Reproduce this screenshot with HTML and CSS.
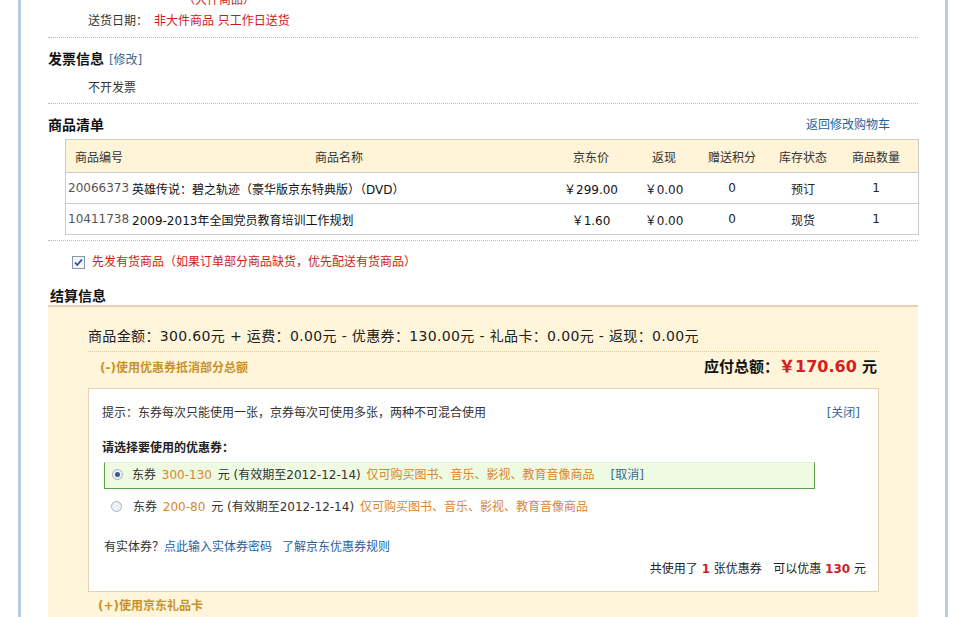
FILE: index.html
```html
<!DOCTYPE html>
<html lang="zh-CN">
<head>
    <meta charset="UTF-8">
    <title>订单结算</title>
    <link rel="stylesheet" href="styles.css">
</head>
<body>
<div class="main">
    <div class="section">
        <div class="row top-cut"><span class="red">（大件商品）</span></div>
        <div class="row indent">送货日期：<span class="red value">非大件商品 只工作日送货</span></div>
    </div>

    <div class="section">
        <div class="title">发票信息 <a class="edit">[修改]</a></div>
        <div class="row indent">不开发票</div>
    </div>

    <div class="section">
        <div class="title title-bar">
            <span>商品清单</span>
            <a class="link">返回修改购物车</a>
        </div>
        <table class="goods">
            <thead>
            <tr>
                <th class="c-id">商品编号</th>
                <th class="c-name">商品名称</th>
                <th class="c-price">京东价</th>
                <th class="c-back">返现</th>
                <th class="c-score">赠送积分</th>
                <th class="c-stock">库存状态</th>
                <th class="c-num">商品数量</th>
            </tr>
            </thead>
            <tbody>
            <tr>
                <td class="id">20066373</td>
                <td class="name">英雄传说：碧之轨迹（豪华版京东特典版）（DVD）</td>
                <td class="price">￥299.00</td>
                <td class="gray">￥0.00</td>
                <td class="gray">0</td>
                <td>预订</td>
                <td class="gray">1</td>
            </tr>
            <tr>
                <td class="id">10411738</td>
                <td class="name">2009-2013年全国党员教育培训工作规划</td>
                <td class="price">￥1.60</td>
                <td class="gray">￥0.00</td>
                <td class="gray">0</td>
                <td>现货</td>
                <td class="gray">1</td>
            </tr>
            </tbody>
        </table>
    </div>

    <div class="row check-row">
        <span class="checkbox">
            <svg width="13" height="13" viewBox="0 0 13 13">
                <rect x="0.5" y="0.5" width="12" height="12" fill="#f4f6f9" stroke="#8497ad"/>
                <path d="M3 6.5 L5.3 9 L10 3.5" fill="none" stroke="#2a4f8a" stroke-width="1.8"/>
            </svg>
        </span>
        <span class="red">先发有货商品（如果订单部分商品缺货，优先配送有货商品）</span>
    </div>

    <div class="title pay-title">结算信息</div>
    <div class="pay">
        <div class="sum">商品金额：300.60元 + 运费：0.00元 - 优惠券：130.00元 - 礼品卡：0.00元 - 返现：0.00元</div>
        <div class="total-row">
            <span class="toggle">(-)使用优惠券抵消部分总额</span>
            <span class="total">应付总额：<b class="money">￥170.60</b> 元</span>
        </div>
        <div class="coupon">
            <div class="tip-row">
                <span>提示：东券每次只能使用一张，京券每次可使用多张，两种不可混合使用</span>
                <a class="edit">[关闭]</a>
            </div>
            <div class="choose">请选择要使用的优惠券：</div>
            <div class="ticket selected">
                <span class="radio on"></span>东券 <span class="orange">300-130</span> 元 (有效期至2012-12-14) <span class="orange">仅可购买图书、音乐、影视、教育音像商品</span><a class="edit cancel">[取消]</a>
            </div>
            <div class="ticket second">
                <span class="radio"></span>东券 <span class="orange">200-80</span> 元 (有效期至2012-12-14) <span class="orange">仅可购买图书、音乐、影视、教育音像商品</span>
            </div>
            <div class="entity">有实体券？<a class="link">点此输入实体券密码</a><a class="link rule">了解京东优惠券规则</a></div>
            <div class="used">共使用了 <b class="red-b">1</b> 张优惠券 &nbsp; 可以优惠 <b class="red-b">130</b> 元</div>
        </div>
        <div class="toggle gift">(+)使用京东礼品卡</div>
    </div>
</div>
</body>
</html>
```

FILE: styles.css
```css
html, body {
    margin: 0;
    height: 100%;
    background: #fff;
}

body {
    font-family: "DejaVu Sans", "Noto Sans CJK SC", sans-serif;
    font-size: 12px;
    color: #333;
    overflow: hidden;
}

a {
    cursor: pointer;
}

.main {
    margin-left: 18px;
    width: 870px;
    min-height: 100%;
    padding: 0 27px;
    border-left: 3px solid #b3cde0;
    border-right: 3px solid #b3cde0;
    box-sizing: content-box;
}

.section {
    border-bottom: 1px dotted #bbb;
    padding-bottom: 5px;
}

.row {
    line-height: 20px;
    height: 20px;
}

.top-cut {
    margin-top: -10px;
    padding-left: 135px;
}

.indent {
    padding-left: 40px;
}

.section .title + .indent {
    margin-top: 6px;
}

.section:first-child .indent {
    padding-top: 1px;
    height: 21px;
    line-height: 21px;
}

.value {
    padding-left: 6px;
}

.red {
    color: #cc1b1b;
}

.gray {
    color: #666;
}

.title {
    margin-top: 9px;
    font-size: 14px;
    font-weight: bold;
    line-height: 24px;
    color: #111;
}

.title-bar {
    display: flex;
    justify-content: space-between;
    padding-right: 28px;
}

.title-bar .link {
    font-size: 12px;
    font-weight: normal;
}

.edit {
    font-size: 12px;
    font-weight: normal;
    color: #3b6a93;
}

.link {
    color: #1f62a0;
}

.goods {
    width: 852px;
    margin: 2px 0 0 17px;
    border-collapse: collapse;
    border: 1px solid #ccc;
    table-layout: fixed;

    th {
        height: 32px;
        padding: 0;
        font-weight: normal;
        background: #fff3d8;
        border-bottom: 1px solid #ccc;
        color: #333;
    }

    td {
        height: 30px;
        text-align: center;
        border-bottom: 1px solid #ccc;
        padding: 0;
        color: #222;
    }

    .c-id { width: 66px; }
    .c-name { width: 414px; }
    .c-price { width: 90px; }
    .c-back { width: 56px; }
    .c-score { width: 80px; }
    .c-stock { width: 62px; }
    .c-num { width: 84px; }

    td.id {
        text-align: left;
        padding-left: 2px;
        color: #555;
    }

    td.name {
        text-align: left;
        color: #111;
    }

    td.price {
        color: #111;
    }
}

.check-row {
    margin-top: 11px;
    padding-left: 24px;
    display: flex;
    align-items: center;
    gap: 0 7px;
}

.checkbox {
    display: flex;
}

.pay-title {
    margin-top: 15px;
    line-height: 18px;
    padding-left: 2px;
}

.pay {
    height: 330px;
    background: #fff5da;
    border-top: 2px solid #e4d3ae;
    padding: 17px 39px 0 40px;
}

.sum {
    font-size: 14px;
    line-height: 24px;
    letter-spacing: 0.35px;
    padding-bottom: 3px;
    border-bottom: 1px dotted #d9c9a4;
    color: #222;
}

.total-row {
    display: flex;
    justify-content: space-between;
    align-items: baseline;
    margin-top: 2px;
    line-height: 26px;
    padding: 0 2px 0 12px;
}

.toggle {
    font-weight: bold;
    color: #c8922c;
}

.total {
    font-size: 15px;
    font-weight: bold;
    color: #111;

    .money {
        font-size: 16px;
        color: #d42020;
    }
}

.coupon {
    margin-top: 7px;
    background: #fff;
    border: 1px solid #e3d3b1;
    padding: 14px 12px 12px 13px;
}

.tip-row {
    display: flex;
    justify-content: space-between;
    line-height: 20px;
    padding-right: 6px;
}

.choose {
    margin-top: 15px;
    line-height: 20px;
    font-weight: bold;
    color: #222;
}

.ticket {
    margin: 4px 51px 0 2px;
    height: 25px;
    line-height: 25px;
    padding-left: 7px;
    border: 1px solid transparent;
    white-space: nowrap;

    .cancel {
        margin-left: 14px;
    }
}

.ticket.selected {
    background: #eefae2;
    border-color: #e3f2d8 #5c9e4a #5c9e4a #5c9e4a;
}

.ticket.second {
    margin-top: 5px;
    padding-left: 6px;
}

.orange {
    color: #dc852f;
    margin: 0 2px;
}

.radio {
    display: inline-block;
    vertical-align: -1px;
    width: 11px;
    height: 11px;
    border-radius: 50%;
    border: 1px solid #a9b3bf;
    background: #eef1f4;
    box-sizing: border-box;
    margin-right: 9px;
    position: relative;
}

.second .radio {
    margin-right: 11px;
}

.radio.on::after {
    content: "";
    position: absolute;
    left: 2px;
    top: 2px;
    width: 5px;
    height: 5px;
    border-radius: 50%;
    background: #2d5d98;
}

.entity {
    margin-top: 16px;
    line-height: 20px;
    padding-left: 2px;

    .rule {
        margin-left: 10px;
    }
}

.used {
    margin-top: 2px;
    line-height: 20px;
    text-align: right;
    color: #222;
}

.red-b {
    color: #c8232c;
}

.gift {
    margin-top: 4px;
    line-height: 20px;
    padding-left: 10px;
}
```
